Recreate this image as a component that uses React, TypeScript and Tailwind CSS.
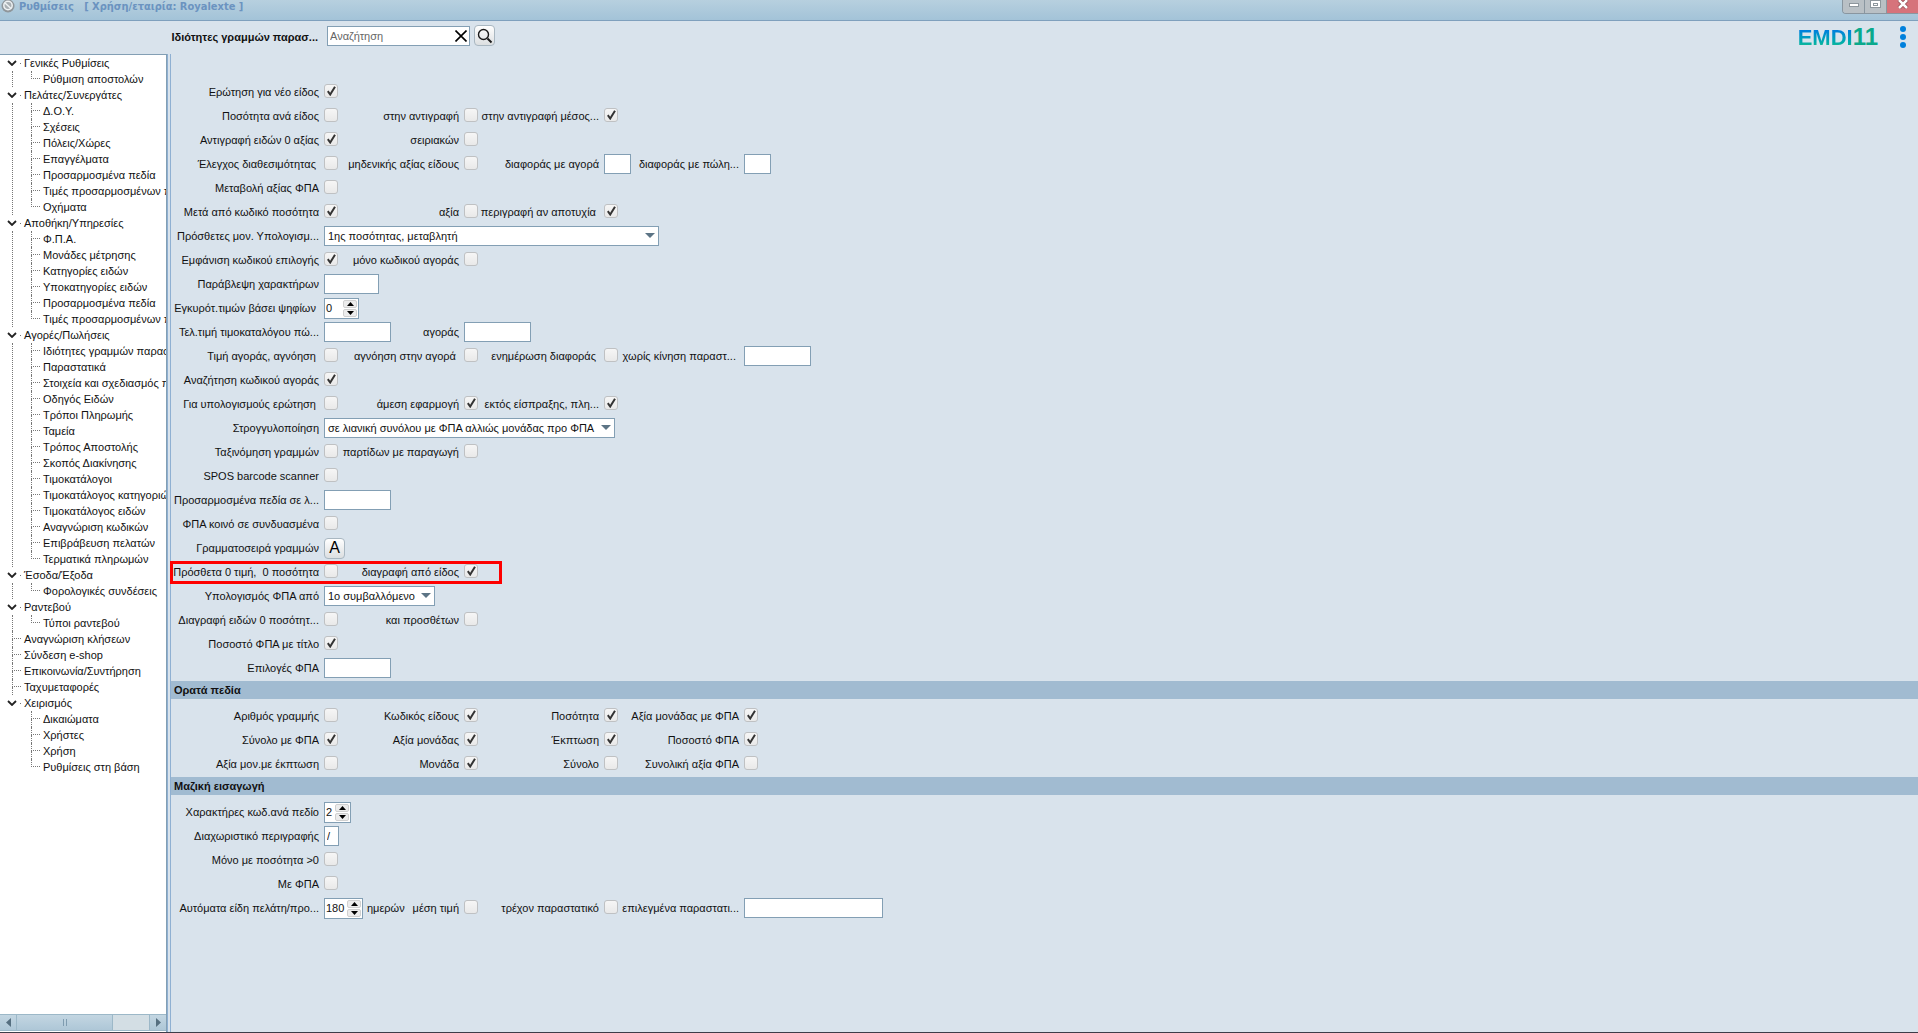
import { useState } from "react";
import type { ReactNode } from "react";

type Branch = { label: string; children?: string[] };

const tree: Branch[] = [
  { label: "Γενικές Ρυθμίσεις", children: ["Ρύθμιση αποστολών"] },
  {
    label: "Πελάτες/Συνεργάτες",
    children: [
      "Δ.Ο.Υ.",
      "Σχέσεις",
      "Πόλεις/Χώρες",
      "Επαγγέλματα",
      "Προσαρμοσμένα πεδία",
      "Τιμές προσαρμοσμένων π",
      "Οχήματα",
    ],
  },
  {
    label: "Αποθήκη/Υπηρεσίες",
    children: [
      "Φ.Π.Α.",
      "Μονάδες μέτρησης",
      "Κατηγορίες ειδών",
      "Υποκατηγορίες ειδών",
      "Προσαρμοσμένα πεδία",
      "Τιμές προσαρμοσμένων π",
    ],
  },
  {
    label: "Αγορές/Πωλήσεις",
    children: [
      "Ιδιότητες γραμμών παρασ",
      "Παραστατικά",
      "Στοιχεία και σχεδιασμός π",
      "Οδηγός Ειδών",
      "Τρόποι Πληρωμής",
      "Ταμεία",
      "Τρόπος Αποστολής",
      "Σκοπός Διακίνησης",
      "Τιμοκατάλογοι",
      "Τιμοκατάλογος κατηγοριώ",
      "Τιμοκατάλογος ειδών",
      "Αναγνώριση κωδικών",
      "Επιβράβευση πελατών",
      "Τερματικά πληρωμών",
    ],
  },
  { label: "Έσοδα/Έξοδα", children: ["Φορολογικές συνδέσεις"] },
  { label: "Ραντεβού", children: ["Τύποι ραντεβού"] },
  { label: "Αναγνώριση κλήσεων" },
  { label: "Σύνδεση e-shop" },
  { label: "Επικοινωνία/Συντήρηση" },
  { label: "Ταχυμεταφορές" },
  {
    label: "Χειρισμός",
    children: ["Δικαιώματα", "Χρήστες", "Χρήση", "Ρυθμίσεις στη βάση"],
  },
];

// --- SVG Icons ---
const AppIcon = () => (
  <svg className="w-4 h-4" viewBox="0 0 16 16" fill="none">
    <circle cx="8" cy="7" r="6.5" fill="#8f969b" />
    <circle cx="8" cy="6.5" r="4.2" fill="#a9b0b4" stroke="#eef2f4" strokeWidth="1.5" />
    <path d="M5 4l6 5.500" stroke="#eef2f4" strokeWidth="1.5" />
  </svg>
);
const ChevronIcon = () => (
  <svg className="w-[10px] h-[6px]" viewBox="0 0 10 6" fill="none" stroke="#222" strokeWidth="1.8">
    <path d="M1 1l4 4 4-4" />
  </svg>
);
const CloseIcon = () => (
  <svg className="w-3 h-3" viewBox="0 0 12 12" fill="none" stroke="#000" strokeWidth="1.6">
    <path d="M0.500 0.500l11 11M11.500 0.500l-11 11" />
  </svg>
);
const SearchIcon = () => (
  <svg className="w-4 h-4" viewBox="0 0 16 16" fill="none" stroke="#1a1a1a">
    <circle cx="6.5" cy="6.5" r="5" strokeWidth="1.4" />
    <path d="M10.500 10.500l4 4" strokeWidth="2" />
  </svg>
);
const CheckIcon = () => (
  <svg
    className="pointer-events-none absolute left-[3px] top-[2px] w-[9px] h-[10px] hidden peer-checked:block"
    viewBox="0 0 9 10"
    fill="none"
    stroke="#333"
    strokeWidth="2"
  >
    <path d="M0.800 5.200l2.400 3.300L8 0.800" />
  </svg>
);
const Triangle = ({ dir }: { dir: "up" | "down" }) => (
  <svg className="w-[7px] h-1" viewBox="0 0 7 4" fill="#000">
    <path d={dir === "up" ? "M0 4L3.500 0L7 4z" : "M0 0h7L3.500 4z"} />
  </svg>
);

// --- Form controls ---
function Check({ id, on }: { id: string; on?: boolean }) {
  return (
    <span className="relative mb-[2px] block h-[14px] w-[14px] shrink-0">
      <input
        id={id}
        type="checkbox"
        defaultChecked={on}
        className="peer block h-[14px] w-[14px] appearance-none rounded-[3px] border border-[#bfc1c3] bg-linear-to-b from-[#f6f6f6] to-[#e9e9e9]"
      />
      <CheckIcon />
    </span>
  );
}

function Text({ id, w, value }: { id: string; w: string; value?: string }) {
  return (
    <input
      id={id}
      defaultValue={value}
      className={`h-5 shrink-0 border border-[#839fb4] bg-white px-[2px] outline-none ${w}`}
    />
  );
}

function Spin({ id, w, value }: { id: string; w: string; value: number }) {
  const [n, setN] = useState(value);
  return (
    <span className={`flex h-[21px] shrink-0 border border-[#839fb4] bg-white ${w}`}>
      <input
        id={id}
        value={n}
        onChange={(e) => setN(Number(e.target.value) || 0)}
        className="min-w-0 flex-1 pl-px outline-none"
      />
      <span className="flex w-[15px] flex-col gap-px pr-px py-px">
        <button
          aria-label="Αύξηση"
          onClick={() => setN(n + 1)}
          className="flex flex-1 items-center justify-center rounded-[2px] border border-[#d0d0d0] bg-[#ececec]"
        >
          <Triangle dir="up" />
        </button>
        <button
          aria-label="Μείωση"
          onClick={() => setN(n - 1)}
          className="flex flex-1 items-center justify-center rounded-[2px] border border-[#d0d0d0] bg-[#ececec]"
        >
          <Triangle dir="down" />
        </button>
      </span>
    </span>
  );
}

function Select({ id, w, value }: { id: string; w: string; value: string }) {
  return (
    <span className={`relative shrink-0 ${w}`}>
      <select
        id={id}
        className="block h-5 w-full appearance-none border border-[#839fb4] bg-white pl-[3px] outline-none"
      >
        <option>{value}</option>
      </select>
      <svg
        className="pointer-events-none absolute right-1 top-[7px] h-[5px] w-[10px]"
        viewBox="0 0 10 5"
        fill="#5c7485"
      >
        <path d="M0 0h10L5 5z" />
      </svg>
    </span>
  );
}

type Field = {
  label: string;
  kind?: "check" | "text" | "spin" | "select" | "font";
  on?: boolean;
  w?: string;
  value?: string;
  after?: string;
};

const c = (label: string, on = false): Field => ({ label, on });
const t = (label: string, w: string, value?: string): Field => ({ label, kind: "text", w, value });

const lineRows: Field[][] = [
  [c("Ερώτηση για νέο είδος", true)],
  [c("Ποσότητα ανά είδος"), c("στην αντιγραφή"), c("στην αντιγραφή μέσος...", true)],
  [c("Αντιγραφή ειδών 0 αξίας", true), c("σειριακών")],
  [
    c("Έλεγχος διαθεσιμότητας "),
    c("μηδενικής αξίας είδους"),
    t("διαφοράς με αγορά", "w-[27px]"),
    t("διαφοράς με πώλη...", "w-[27px]"),
  ],
  [c("Μεταβολή αξίας ΦΠΑ")],
  [c("Μετά από κωδικό ποσότητα", true), c("αξία"), c("περιγραφή αν αποτυχία ", true)],
  [{ label: "Πρόσθετες μον. Υπολογισμ...", kind: "select", w: "w-[335px]", value: "1ης ποσότητας, μεταβλητή" }],
  [c("Εμφάνιση κωδικού επιλογής", true), c("μόνο κωδικού αγοράς")],
  [t("Παράβλεψη χαρακτήρων", "w-[55px]")],
  [{ label: "Εγκυρότ.τιμών βάσει ψηφίων ", kind: "spin", w: "w-[35px]", value: "0" }],
  [t("Τελ.τιμή τιμοκαταλόγου πώ...", "w-[67px]"), t("αγοράς", "w-[67px]")],
  [
    c("Τιμή αγοράς, αγνόηση "),
    c("αγνόηση στην αγορά "),
    c("ενημέρωση διαφοράς "),
    t("χωρίς κίνηση παραστ... ", "w-[67px]"),
  ],
  [c("Αναζήτηση κωδικού αγοράς", true)],
  [c("Για υπολογισμούς ερώτηση "), c("άμεση εφαρμογή", true), c("εκτός είσπραξης, πλη...", true)],
  [
    {
      label: "Στρογγυλοποίηση",
      kind: "select",
      w: "w-[291px]",
      value: "σε λιανική συνόλου με ΦΠΑ αλλιώς μονάδας προ ΦΠΑ",
    },
  ],
  [c("Ταξινόμηση γραμμών"), c("παρτίδων με παραγωγή")],
  [c("SPOS barcode scanner")],
  [t("Προσαρμοσμένα πεδία σε λ...", "w-[67px]")],
  [c("ΦΠΑ κοινό σε συνδυασμένα")],
  [{ label: "Γραμματοσειρά γραμμών", kind: "font" }],
  [c("Πρόσθετα 0 τιμή,  0 ποσότητα"), c("διαγραφή από είδος", true)],
  [{ label: "Υπολογισμός ΦΠΑ από", kind: "select", w: "w-[111px]", value: "1ο συμβαλλόμενο" }],
  [c("Διαγραφή ειδών 0 ποσότητ..."), c("και προσθέτων")],
  [c("Ποσοστό ΦΠΑ με τίτλο", true)],
  [t("Επιλογές ΦΠΑ", "w-[67px]")],
];

const visibleRows: Field[][] = [
  [c("Αριθμός γραμμής"), c("Κωδικός είδους", true), c("Ποσότητα", true), c("Αξία μονάδας με ΦΠΑ", true)],
  [c("Σύνολο με ΦΠΑ", true), c("Αξία μονάδας", true), c("Έκπτωση", true), c("Ποσοστό ΦΠΑ", true)],
  [c("Αξία μον.με έκπτωση"), c("Μονάδα", true), c("Σύνολο"), c("Συνολική αξία ΦΠΑ")],
];

const bulkRows: Field[][] = [
  [{ label: "Χαρακτήρες κωδ.ανά πεδίο", kind: "spin", w: "w-[27px]", value: "2" }],
  [t("Διαχωριστικό περιγραφής", "w-[15px]", "/")],
  [c("Μόνο με ποσότητα >0")],
  [c("Με ΦΠΑ")],
  [
    { label: "Αυτόματα είδη πελάτη/προ...", kind: "spin", w: "w-[39px]", value: "180", after: "ημερών" },
    c("μέση τιμή"),
    c("τρέχον παραστατικό"),
    t("επιλεγμένα παραστατι...", "w-[139px]"),
  ],
];

function Control({ id, field }: { id: string; field: Field }) {
  const w = field.w ?? "";
  switch (field.kind) {
    case "text":
      return <Text id={id} w={w} value={field.value} />;
    case "spin":
      return <Spin id={id} w={w} value={Number(field.value)} />;
    case "select":
      return <Select id={id} w={w} value={field.value ?? ""} />;
    case "font":
      return (
        <button
          id={id}
          className="flex h-[21px] w-[21px] shrink-0 items-center justify-center rounded-[4px] border border-[#a9b7c1] bg-linear-to-b from-white to-[#dcdfe1] text-base text-black"
        >
          A
        </button>
      );
    default:
      return <Check id={id} on={field.on} />;
  }
}

function Rows({ name, rows, marked }: { name: string; rows: Field[][]; marked?: number }) {
  return (
    <div>
      {rows.map((row, r) => (
        <div
          key={r}
          className="relative grid h-6 grid-cols-[148px_17px_113px_17px_113px_17px_113px_17px] items-center gap-x-[5px]"
        >
          {row.map((field, i) => {
            const id = `${name}-${r}-${i}`;
            return (
              <div key={id} className="contents">
                <label htmlFor={id} className="flex justify-end whitespace-pre">
                  {field.label}
                </label>
                <span className="flex items-center gap-1 whitespace-nowrap">
                  <Control id={id} field={field} />
                  {field.after}
                </span>
              </div>
            );
          })}
          {marked === r && (
            <div className="pointer-events-none absolute -left-px top-px h-[23px] w-[332px] border-3 border-[#fe0000]" />
          )}
        </div>
      ))}
    </div>
  );
}

const Band = ({ children }: { children: ReactNode }) => (
  <h2 className="mt-px mb-[5px] h-[18px] bg-[#a1bbd1] pl-[3px] leading-[18px] font-bold">
    {children}
  </h2>
);

// --- Navigation tree ---
const dots = "border-dotted border-[#777]";

function Elbow({ w, last }: { w: string; last?: boolean }) {
  return (
    <span className={`block shrink-0 ${w}`}>
      <span className={`block h-2 border-b border-l ${dots}`} />
      {!last && <span className={`block h-2 border-l ${dots}`} />}
    </span>
  );
}

function Tree() {
  return (
    <ul className="min-h-0 flex-1 overflow-hidden whitespace-nowrap leading-4">
      {tree.map((branch, b) => (
        <li key={branch.label}>
          {branch.children ? (
            <button className="flex h-4 items-center pl-[7px]">
              <ChevronIcon />
              <span className="ml-[3px] mr-[3px] h-px w-px bg-[#777]" />
              {branch.label}
            </button>
          ) : (
            <div className="flex h-4 pl-3">
              <Elbow w="w-[9px]" />
              <a href="#" className="ml-[3px]">
                {branch.label}
              </a>
            </div>
          )}
          {branch.children && (
            <ul className="flex pl-3">
              <li
                aria-hidden="true"
                className={`w-[19px] shrink-0 ${b < tree.length - 1 ? `border-l ${dots}` : ""}`}
              />
              <li className="min-w-0">
                {branch.children.map((child, i) => (
                  <div key={child} className="flex h-4">
                    <Elbow w="w-[9px]" last={i === branch.children!.length - 1} />
                    <a href="#" className="ml-[3px]">
                      {child}
                    </a>
                  </div>
                ))}
              </li>
            </ul>
          )}
        </li>
      ))}
    </ul>
  );
}

function ScrollBar() {
  return (
    <div className="mb-px flex h-[17px] shrink-0 border-y border-[#9cb8c8] bg-[#d3dee4]">
      <button
        aria-label="Αριστερά"
        className="flex w-[17px] items-center justify-center border-r border-[#9cb8c8] bg-linear-to-b from-[#c3d6e2] to-[#aec7d7]"
      >
        <svg className="h-[9px] w-[5px]" viewBox="0 0 5 9" fill="#566f80">
          <path d="M5 0v9L0 4.500z" />
        </svg>
      </button>
      <div className="flex w-24 items-center justify-center gap-[2px] border-r border-[#9cb8c8] bg-linear-to-b from-[#c3d6e2] to-[#aec7d7]">
        <span className="h-[7px] w-px bg-[#7f9cb0]" />
        <span className="h-[7px] w-px bg-[#7f9cb0]" />
      </div>
      <button
        aria-label="Δεξιά"
        className="ml-auto flex w-[17px] items-center justify-center border-l border-[#9cb8c8] bg-linear-to-b from-[#c3d6e2] to-[#aec7d7]"
      >
        <svg className="h-[9px] w-[5px]" viewBox="0 0 5 9" fill="#566f80">
          <path d="M0 0v9L5 4.500z" />
        </svg>
      </button>
    </div>
  );
}

function TitleBar() {
  return (
    <div className="flex h-[21px] shrink-0 justify-between border-b border-[#7fa0bd] bg-linear-to-b from-[#b7d0df] to-[#a3c3d8]">
      <div className="flex h-[14px] items-center gap-[3px] whitespace-pre font-['DejaVu_Sans_Condensed','DejaVu_Sans',sans-serif] font-bold text-[#6b93c0]">
        <AppIcon />
        {"Ρυθμίσεις   [ Χρήση/εταιρία: Royalexte ]"}
      </div>
      <div className="flex h-[14px] overflow-hidden rounded-bl-[4px] border-b border-l border-[#8996a0]">
        <button aria-label="Ελαχιστοποίηση" className="flex w-[22px] items-center justify-center border-r border-[#8996a0] bg-[#b9c0c5]">
          <span className="mt-[-3px] h-1 w-[10px] border border-[#8e979d] bg-white" />
        </button>
        <button aria-label="Μεγιστοποίηση" className="flex w-[22px] items-start justify-center border-r border-[#8996a0] bg-[#b9c0c5]">
          <span className="flex h-2 w-[11px] items-center justify-center border border-[#8e979d] bg-white">
            <span className="h-[3px] w-[5px] border border-[#8e979d]" />
          </span>
        </button>
        <button aria-label="Κλείσιμο" className="flex w-[31px] items-start justify-center bg-[#d6737b]">
          <svg className="h-[9px] w-3" viewBox="0 0 12 9" fill="none">
            <path d="M2 0l8 8M10 0l-8 8" stroke="#8f4b52" strokeWidth="4" />
            <path d="M2 0l8 8M10 0l-8 8" stroke="#fff" strokeWidth="2.5" />
          </svg>
        </button>
      </div>
    </div>
  );
}

export default function App() {
  return (
    <div className="flex h-screen flex-col overflow-hidden border-b border-[#3c3c48] bg-[#d9e3ec] font-['Liberation_Sans',Arial,sans-serif] text-[11px] leading-4 text-[#111]">
      <TitleBar />

      <header className="flex h-[33px] shrink-0 items-start pt-1 pr-2">
        <h1 className="mt-1 w-[318px] text-right font-bold">Ιδιότητες γραμμών παρασ...</h1>
        <div className="relative ml-[9px] mt-px">
          <input
            aria-label="Αναζήτηση"
            placeholder="Αναζήτηση"
            className="block h-5 w-[143px] border border-[#839fb4] bg-white px-[2px] outline-none placeholder:text-[#666]"
          />
          <button aria-label="Καθαρισμός" className="absolute right-[3px] top-1">
            <CloseIcon />
          </button>
        </div>
        <button
          aria-label="Εύρεση"
          className="ml-1 flex h-[21px] w-[21px] items-center justify-center rounded-[4px] border border-[#a9b7c1] bg-linear-to-b from-white to-[#dcdfe1]"
        >
          <SearchIcon />
        </button>
        <div className="ml-auto flex items-baseline text-[22px] leading-6 font-bold">
          <span className="bg-linear-to-b from-[#0080dc] from-20% to-[#12b69b] to-80% bg-clip-text text-transparent">EMDI</span>
          <span className="text-2xl leading-6 text-[#0aa98c]">11</span>
        </div>
        <button aria-label="Μενού" className="ml-[22px] mr-1 flex h-6 flex-col items-center justify-center gap-[2px]">
          <span className="h-[6px] w-[6px] rounded-full bg-[#0080dc]" />
          <span className="h-[6px] w-[6px] rounded-full bg-[#0080dc]" />
          <span className="h-[6px] w-[6px] rounded-full bg-[#0080dc]" />
        </button>
      </header>

      <div className="flex min-h-0 flex-1">
        <nav className="flex w-[167px] shrink-0 flex-col border-t border-r border-[#839fb4] bg-white">
          <Tree />
          <ScrollBar />
        </nav>
        <div className="w-1 shrink-0 border-x border-[#8fb0d2] bg-[#d9e3ec]" />
        <main className="min-w-0 flex-1 pt-[26px]">
          <Rows name="line" rows={lineRows} marked={20} />
          <Band>Ορατά πεδία</Band>
          <Rows name="visible" rows={visibleRows} />
          <Band>Μαζική εισαγωγή</Band>
          <Rows name="bulk" rows={bulkRows} />
        </main>
      </div>
    </div>
  );
}
